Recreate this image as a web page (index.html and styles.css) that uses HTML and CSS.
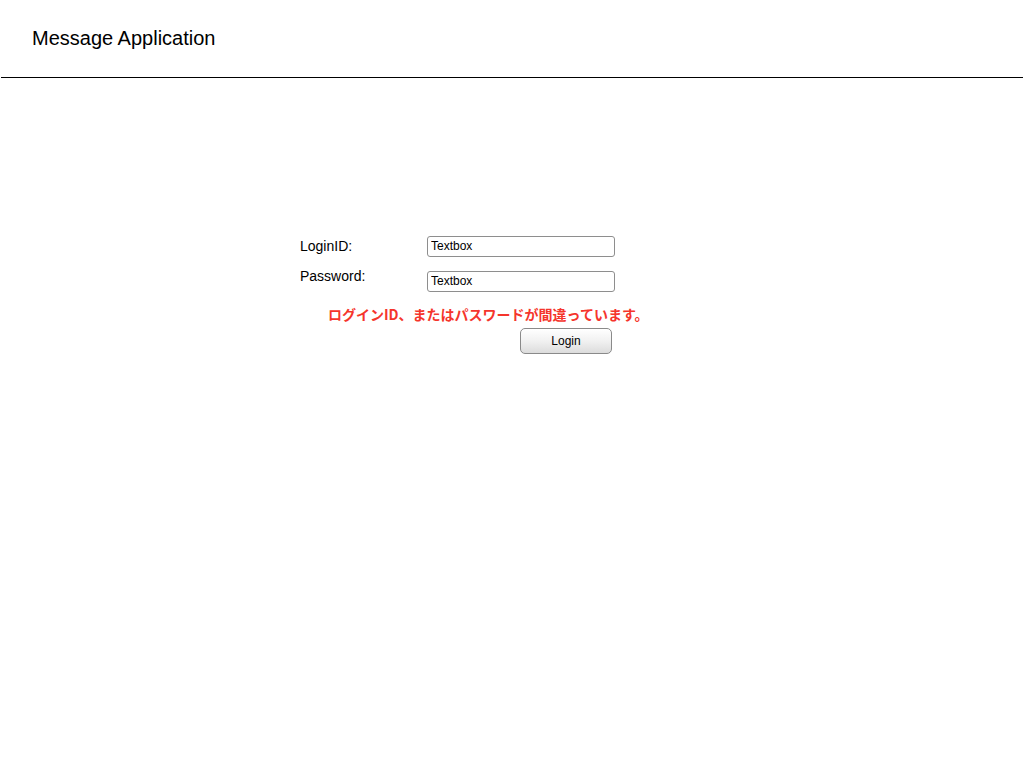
FILE: index.html
```html
<!DOCTYPE html>
<html lang="ja">
<head>
<meta charset="utf-8">
<title>Message Application</title>
<link rel="stylesheet" href="styles.css">
</head>
<body>
<header class="header">
  <h1 class="title">Message Application</h1>
</header>
<main class="main">
  <form class="login-form">
    <div class="row">
      <label class="label" for="loginid">LoginID:</label>
      <input class="textbox" id="loginid" type="text" value="Textbox">
    </div>
    <div class="row">
      <label class="label" for="password">Password:</label>
      <input class="textbox" id="password" type="text" value="Textbox">
    </div>
    <p class="error">ログインID、またはパスワードが間違っています。</p>
    <div class="actions">
      <button class="button" type="button">Login</button>
    </div>
  </form>
</main>
</body>
</html>
```

FILE: styles.css
```css
html, body {
  margin: 0;
  padding: 0;
  background: #ffffff;
  font-family: "Liberation Sans", Arial, "Noto Sans CJK JP", sans-serif;
  color: #000;
}

.header {
  height: 77px;
  margin: 0 1px;
  border-bottom: 1px solid #000;
  display: flex;
  align-items: center;
  padding-left: 31px;
}

.title {
  margin: 0;
  font-size: 20px;
  font-weight: normal;
  line-height: 24px;
  padding-bottom: 1px;
}

.main {
  padding-top: 158px;
  padding-left: 300px;
}

.login-form {
  display: flex;
  flex-direction: column;
  width: 360px;
}

.row {
  display: flex;
  align-items: flex-start;
  height: 35px;
}

.label {
  width: 127px;
  font-size: 14px;
  line-height: 16px;
  padding-top: 2px;
}

.row + .row .label {
  padding-top: 0;
  margin-top: -3px;
}

.textbox {
  box-sizing: border-box;
  width: 188px;
  height: 21px;
  margin: 0;
  padding: 0 3px 1px;
  border: 1px solid #8e8e8e;
  border-radius: 3px;
  font-family: "Liberation Sans", Arial, sans-serif;
  font-size: 12px;
  color: #000;
  background: #fff;
  outline: none;
}

.error {
  margin: -1px 0 0 28px;
  font-family: "Noto Sans CJK JP", sans-serif;
  font-size: 14px;
  font-weight: bold;
  line-height: 18px;
  color: #f5352c;
}

.actions {
  display: flex;
  padding-left: 220px;
  margin-top: 5px;
}

.button {
  box-sizing: border-box;
  width: 92px;
  height: 26px;
  border: 1px solid #8a8a8a;
  border-radius: 5px;
  background: linear-gradient(#ffffff, #f1f1f1 50%, #dcdcdc);
  font-family: "Liberation Sans", Arial, sans-serif;
  font-size: 12px;
  color: #000;
  padding: 0;
}
```
